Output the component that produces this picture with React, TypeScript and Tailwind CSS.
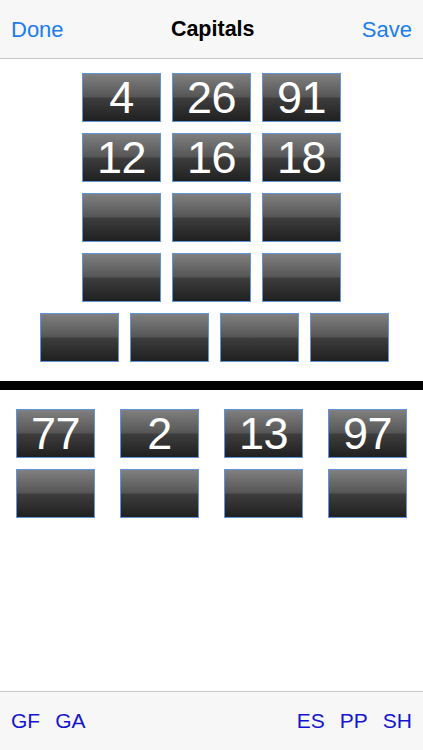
import React from 'react';

type TileProps = { value?: string };

function Tile({ value }: TileProps) {
    return (
        <div className="relative w-[79px] h-[49px] border border-[#5f95dc] flex items-center justify-center overflow-hidden bg-[linear-gradient(to_bottom,#808080_0%,#666666_30%,#565656_48%,#3d3d3d_52%,#2c2c2c_80%,#202020_100%)]">
            {value && (
                <span className="text-white text-[45px] leading-none tracking-[-0.5px]">{value}</span>
            )}
        </div>
    );
}

export default function App() {
    const topRows = [
        ['4', '26', '91'],
        ['12', '16', '18'],
        ['', '', ''],
        ['', '', ''],
    ];
    const bottomRows = [
        ['77', '2', '13', '97'],
        ['', '', '', ''],
    ];

    return (
        <div
            className="w-[423px] h-[750px] bg-white flex flex-col"
            style={{ fontFamily: '"Liberation Sans", Arial, sans-serif' }}
        >
            <div className="h-[59px] shrink-0 bg-[#f7f7f7] border-b border-[#c8c7cc] flex items-center justify-between px-[11px]">
                <span className="text-[22px] text-[#1a7ef0]">Done</span>
                <span className="text-[21.5px] font-bold text-black">Capitals</span>
                <span className="text-[22px] text-[#1a7ef0]">Save</span>
            </div>

            <div className="flex flex-col items-center gap-[11px] pt-[14px]">
                {topRows.map((row, i) => (
                    <div key={i} className="flex gap-[11px]">
                        {row.map((v, j) => (
                            <Tile key={j} value={v} />
                        ))}
                    </div>
                ))}
                <div className="flex gap-[11px] pl-[6px]">
                    {[0, 1, 2, 3].map((j) => (
                        <Tile key={j} />
                    ))}
                </div>
            </div>

            <div className="h-[9px] bg-black mt-[19px] shrink-0" />

            <div className="flex flex-col items-center gap-[11px] pt-[19px]">
                {bottomRows.map((row, i) => (
                    <div key={i} className="flex gap-[25px]">
                        {row.map((v, j) => (
                            <Tile key={j} value={v} />
                        ))}
                    </div>
                ))}
            </div>

            <div className="flex-1" />

            <div className="h-[59px] shrink-0 bg-[#f7f7f7] border-t border-[#c8c7cc] flex items-center justify-between px-[11px] text-[21px] text-[#1414d2]">
                <div className="flex gap-[15px]">
                    <span>GF</span>
                    <span>GA</span>
                </div>
                <div className="flex gap-[15px]">
                    <span>ES</span>
                    <span>PP</span>
                    <span>SH</span>
                </div>
            </div>
        </div>
    );
}
